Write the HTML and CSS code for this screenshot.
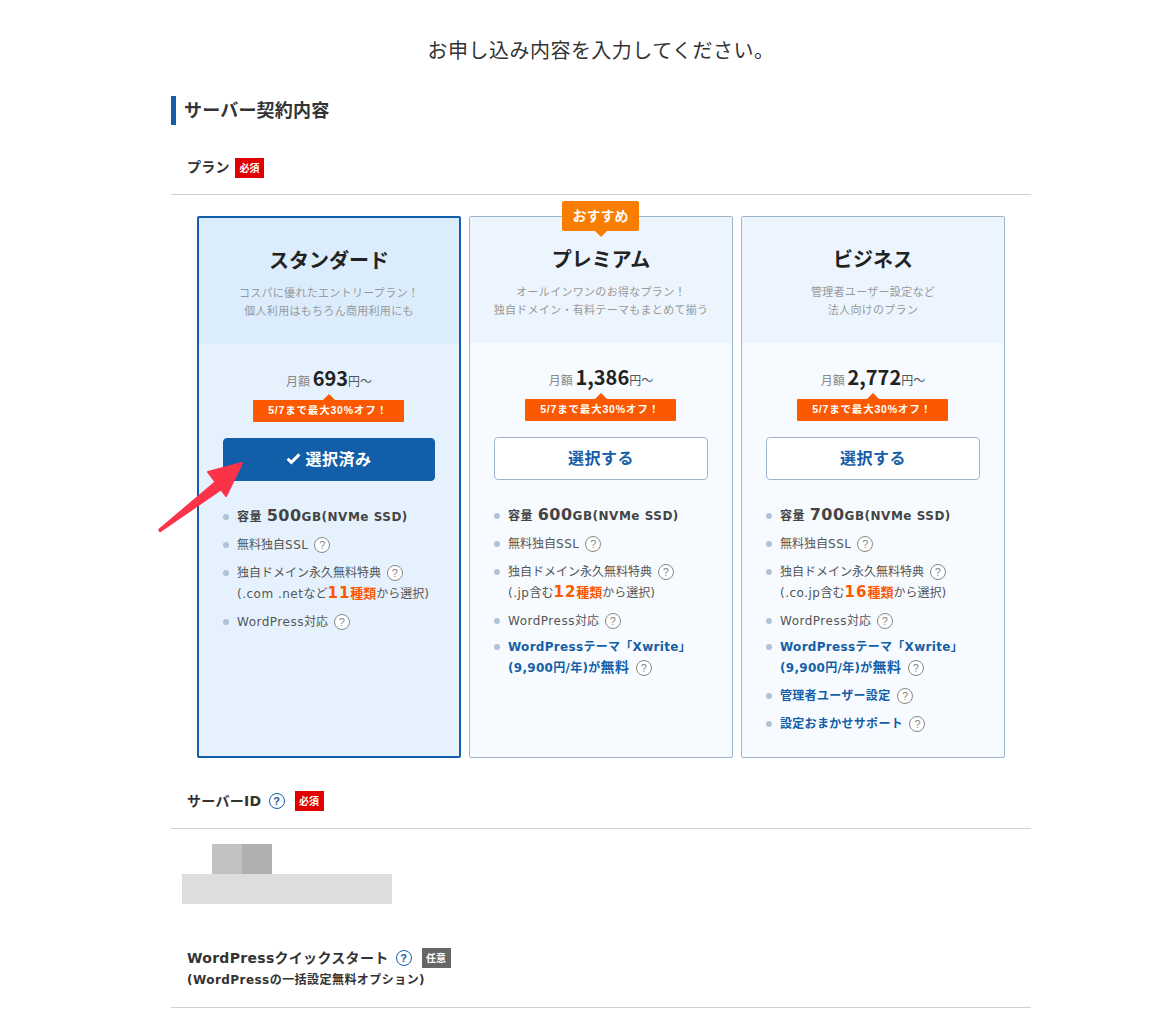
FILE: index.html
```html
<!DOCTYPE html>
<html lang="ja">
<head>
    <meta charset="UTF-8">
    <meta name="viewport" content="width=device-width, initial-scale=1.0">
    <title>お申し込み内容の入力</title>
    <link rel="stylesheet" href="styles.css">
</head>
<body>
    <p class="lead">お申し込み内容を入力してください。</p>
    <div class="container">
        <h2 class="section-title">サーバー契約内容</h2>

        <div class="field-label field-plan">
            <span>プラン</span>
            <span class="tag tag-required">必須</span>
        </div>

        <div class="plans">
            <div class="plan selected">
                <div class="plan-head">
                    <h3>スタンダード</h3>
                    <p>コスパに優れたエントリープラン！<br>個人利用はもちろん商用利用にも</p>
                </div>
                <div class="plan-body">
                    <div class="price"><span class="price-label">月額</span> <b>693</b>円〜</div>
                    <div class="campaign">5/7まで最大30%オフ！</div>
                    <button class="select-button">
                        <svg class="check" viewBox="0 0 14 12" width="15" height="13"><path d="M1.5 6.2 L5 9.6 L12.5 2.2" fill="none" stroke="#fff" stroke-width="2.8"/></svg>
                        選択済み
                    </button>
                    <ul class="features">
                        <li class="strong">容量 <span class="size">500</span>GB(NVMe SSD)</li>
                        <li>無料独自<span class="latin">SSL</span> <i class="help">?</i></li>
                        <li>独自ドメイン永久無料特典 <i class="help">?</i><br><span class="latin">(.com .net</span>など<span class="count"><b>11</b>種類</span>から選択)</li>
                        <li><span class="latin">WordPress</span>対応 <i class="help">?</i></li>
                    </ul>
                </div>
            </div>

            <div class="plan">
                <div class="recommend">おすすめ</div>
                <div class="plan-head">
                    <h3>プレミアム</h3>
                    <p>オールインワンのお得なプラン！<br>独自ドメイン・有料テーマもまとめて揃う</p>
                </div>
                <div class="plan-body">
                    <div class="price"><span class="price-label">月額</span> <b>1,386</b>円〜</div>
                    <div class="campaign">5/7まで最大30%オフ！</div>
                    <button class="select-button">選択する</button>
                    <ul class="features">
                        <li class="strong">容量 <span class="size">600</span>GB(NVMe SSD)</li>
                        <li>無料独自<span class="latin">SSL</span> <i class="help">?</i></li>
                        <li>独自ドメイン永久無料特典 <i class="help">?</i><br><span class="latin">(.jp</span>含む<span class="count"><b>12</b>種類</span>から選択)</li>
                        <li class="tight"><span class="latin">WordPress</span>対応 <i class="help">?</i></li>
                        <li class="extra">WordPressテーマ「Xwrite」<br>(9,900円/年)が<span class="free">無料</span> <i class="help">?</i></li>
                    </ul>
                </div>
            </div>

            <div class="plan">
                <div class="plan-head">
                    <h3>ビジネス</h3>
                    <p>管理者ユーザー設定など<br>法人向けのプラン</p>
                </div>
                <div class="plan-body">
                    <div class="price"><span class="price-label">月額</span> <b>2,772</b>円〜</div>
                    <div class="campaign">5/7まで最大30%オフ！</div>
                    <button class="select-button">選択する</button>
                    <ul class="features">
                        <li class="strong">容量 <span class="size">700</span>GB(NVMe SSD)</li>
                        <li>無料独自<span class="latin">SSL</span> <i class="help">?</i></li>
                        <li>独自ドメイン永久無料特典 <i class="help">?</i><br><span class="latin">(.co.jp</span>含む<span class="count"><b>16</b>種類</span>から選択)</li>
                        <li class="tight"><span class="latin">WordPress</span>対応 <i class="help">?</i></li>
                        <li class="extra">WordPressテーマ「Xwrite」<br>(9,900円/年)が<span class="free">無料</span> <i class="help">?</i></li>
                        <li class="extra">管理者ユーザー設定 <i class="help">?</i></li>
                        <li class="extra">設定おまかせサポート <i class="help">?</i></li>
                    </ul>
                </div>
            </div>
        </div>

        <div class="field-label field-server">
            <span>サーバーID</span>
            <i class="help help-blue">?</i>
            <span class="tag tag-required">必須</span>
        </div>

        <div class="masked">
            <div class="masked-top"><span></span><span></span></div>
            <div class="masked-bottom"></div>
        </div>

        <div class="field-label field-quick">
            <div class="quick-row">
                <span>WordPressクイックスタート</span>
                <i class="help help-blue">?</i>
                <span class="tag tag-optional">任意</span>
            </div>
            <div class="quick-note">(WordPressの一括設定無料オプション)</div>
        </div>
    </div>

    <!-- 注釈の矢印 -->
    <svg class="arrow" width="100" height="80" viewBox="0 0 100 80">
        <path d="M1.5 73.5 L60 24 L67 32 L3 76 Z" fill="#fb3349" stroke="#fb3349" stroke-width="1" stroke-linejoin="round"/>
        <path d="M51 16 L85 7 L69 40 Z" fill="#fb3349" stroke="#fb3349" stroke-width="2" stroke-linejoin="round"/>
    </svg>
</body>
</html>
```
FILE: styles.css
```css
body {
    font-family: "DejaVu Sans", "Noto Sans CJK JP", sans-serif;
    margin: 0;
    padding: 0;
    background-color: #fff;
    color: #333;
    position: relative;
}
.lead {
    margin: 0;
    padding: 37px 0 0 32px;
    height: 41px;
    line-height: 26px;
    text-align: center;
    font-family: "Noto Sans CJK JP", sans-serif;
    font-size: 20px;
    letter-spacing: 0.47px;
}
.container {
    width: 860px;
    margin: 0 0 0 171px;
    padding-top: 18px;
}
.section-title {
    margin: 0;
    height: 29px;
    line-height: 27px;
    padding-left: 8px;
    border-left: 5px solid #135ea8;
    font-family: "Noto Sans CJK JP", sans-serif;
    font-size: 18px;
    font-weight: 700;
    letter-spacing: 0.2px;
}
.field-label {
    display: flex;
    align-items: flex-start;
    padding-left: 16px;
    border-bottom: 1px solid #d0d0d0;
    font-size: 14px;
    font-weight: 700;
    line-height: 20px;
    letter-spacing: 0.3px;
    color: #333;
}
.field-plan {
    margin-top: 27px;
    height: 37px;
    padding-top: 5px;
    gap: 5px;
}
.field-plan .tag {
    margin-top: 1px;
}
.field-server {
    margin-top: 22px;
    height: 37px;
    padding-top: 11px;
    gap: 7px;
}
.field-server .help {
    margin: 2px 3px 0 0;
}
.tag {
    display: inline-block;
    width: 29px;
    height: 20px;
    line-height: 20px;
    text-align: center;
    color: #fff;
    font-size: 10px;
    font-weight: 700;
    letter-spacing: 0;
    font-family: "Noto Sans CJK JP", sans-serif;
}
.tag-required {
    background-color: #e00000;
}
.tag-optional {
    background-color: #666;
}
.plans {
    display: flex;
    gap: 8px;
    padding: 21px 26px 0;
}
.plan {
    position: relative;
    width: 264px;
    height: 542px;
    box-sizing: border-box;
    border: 1px solid #9db6d0;
    border-radius: 2px;
    background-color: #f7fbff;
}
.plan.selected {
    border: 2px solid #135ea8;
    background-color: #e5f2fe;
}
.plan-head {
    height: 126px;
    padding-top: 27px;
    box-sizing: border-box;
    text-align: center;
    background-color: #ecf5fd;
}
.plan.selected .plan-head {
    background-color: #dbedfd;
}
.plan-head h3 {
    margin: 0 0 8px;
    font-family: "Noto Sans CJK JP", sans-serif;
    font-size: 20px;
    font-weight: 700;
    line-height: 30px;
    color: #222;
}
.plan-head p {
    margin: 0;
    font-family: "Noto Sans CJK JP", sans-serif;
    font-size: 11px;
    line-height: 18px;
    color: #999;
    letter-spacing: 0.3px;
}
.recommend {
    position: absolute;
    top: -16px;
    left: 92px;
    width: 77px;
    height: 30px;
    line-height: 29px;
    text-align: center;
    color: #fff;
    font-family: "Noto Sans CJK JP", sans-serif;
    font-size: 14px;
    font-weight: 700;
    border-radius: 2px;
    background-color: #f97d00;
}
.recommend::after {
    content: "";
    position: absolute;
    left: 33px;
    bottom: -6px;
    border-left: 6px solid transparent;
    border-right: 6px solid transparent;
    border-top: 6px solid #f97d00;
}
.plan-body {
    padding: 0 24px;
}
.price {
    margin-top: 23px;
    height: 29px;
    line-height: 28px;
    text-align: center;
    font-family: "Noto Sans CJK JP", sans-serif;
    font-size: 12px;
    color: #555;
}
.price-label {
    color: #888;
}
.price b {
    font-size: 20px;
    line-height: 1;
    color: #222;
}
.campaign {
    position: relative;
    width: 151px;
    height: 22px;
    margin: 4px 0 0 calc((100% - 153px) / 2);
    line-height: 21px;
    text-align: center;
    color: #fff;
    font-family: "Liberation Sans", "Noto Sans CJK JP", sans-serif;
    font-size: 10.5px;
    font-weight: 700;
    letter-spacing: 0.8px;
    border-radius: 1px;
    background-color: #fb5800;
}
.campaign::before {
    content: "";
    position: absolute;
    left: 70px;
    top: -6px;
    border-left: 6px solid transparent;
    border-right: 6px solid transparent;
    border-bottom: 6px solid #fb5800;
}
.select-button {
    display: flex;
    align-items: center;
    justify-content: center;
    gap: 4px;
    width: 100%;
    height: 43px;
    margin-top: 16px;
    padding: 0 0 3px;
    box-sizing: border-box;
    border: 1px solid #9db6d0;
    border-radius: 4px;
    background-color: #fff;
    color: #135ea8;
    font-family: "Noto Sans CJK JP", sans-serif;
    font-size: 16px;
    font-weight: 700;
    letter-spacing: 0.5px;
}
.selected .select-button {
    border-color: #135ea8;
    background-color: #135ea8;
    color: #fff;
}
.features {
    list-style: none;
    margin: 26px 0 0;
    padding: 0;
    font-size: 12px;
    line-height: 21px;
    color: #555;
}
.features li {
    position: relative;
    padding-left: 14px;
    margin-bottom: 7px;
    white-space: nowrap;
}
.features li.tight {
    margin-bottom: 5px;
}
.features li::before {
    content: "";
    position: absolute;
    left: 0;
    top: 7px;
    width: 6px;
    height: 6px;
    border-radius: 50%;
    background-color: #b0c2d6;
}
.latin {
    letter-spacing: 0.5px;
}
.features .strong {
    font-weight: 700;
    color: #444;
    letter-spacing: 0.5px;
}
.size {
    font-size: 16px;
    line-height: 1;
}
.count {
    font-size: 13px;
    font-weight: 700;
    line-height: 1;
    color: #fb5800;
}
.count b {
    font-size: 15px;
    letter-spacing: 1px;
}
.features .extra {
    font-weight: 700;
    color: #135ea8;
    letter-spacing: 0.3px;
}
.free {
    font-size: 14px;
    line-height: 1;
}
.help {
    display: inline-block;
    box-sizing: border-box;
    width: 16px;
    height: 16px;
    margin: 2px 0 0 2px;
    border: 1px solid #888;
    border-radius: 50%;
    background-color: #fff;
    color: #888;
    font-family: "Liberation Sans", sans-serif;
    font-size: 11px;
    font-style: normal;
    font-weight: 400;
    line-height: 14px;
    letter-spacing: 0;
    text-align: center;
    vertical-align: top;
}
.help-blue {
    border-color: #135ea8;
    color: #135ea8;
    font-weight: 700;
}
.masked {
    margin: 15px 0 0 11px;
}
.masked-top {
    display: flex;
    padding-left: 30px;
}
.masked-top span {
    width: 30px;
    height: 30px;
    background-color: #c2c2c2;
}
.masked-top span + span {
    background-color: #b0b0b0;
}
.masked-bottom {
    width: 210px;
    height: 30px;
    background-color: #ddd;
}
.field-quick {
    display: block;
    margin-top: 44px;
    height: 59px;
}
.quick-row {
    display: flex;
    align-items: center;
    gap: 7px;
    height: 20px;
}
.quick-row .help {
    margin: 0 3px 0 0;
}
.quick-note {
    margin-top: 3px;
    font-size: 12px;
    line-height: 18px;
    letter-spacing: 0.45px;
}
.arrow {
    position: absolute;
    left: 157px;
    top: 456px;
}
```
